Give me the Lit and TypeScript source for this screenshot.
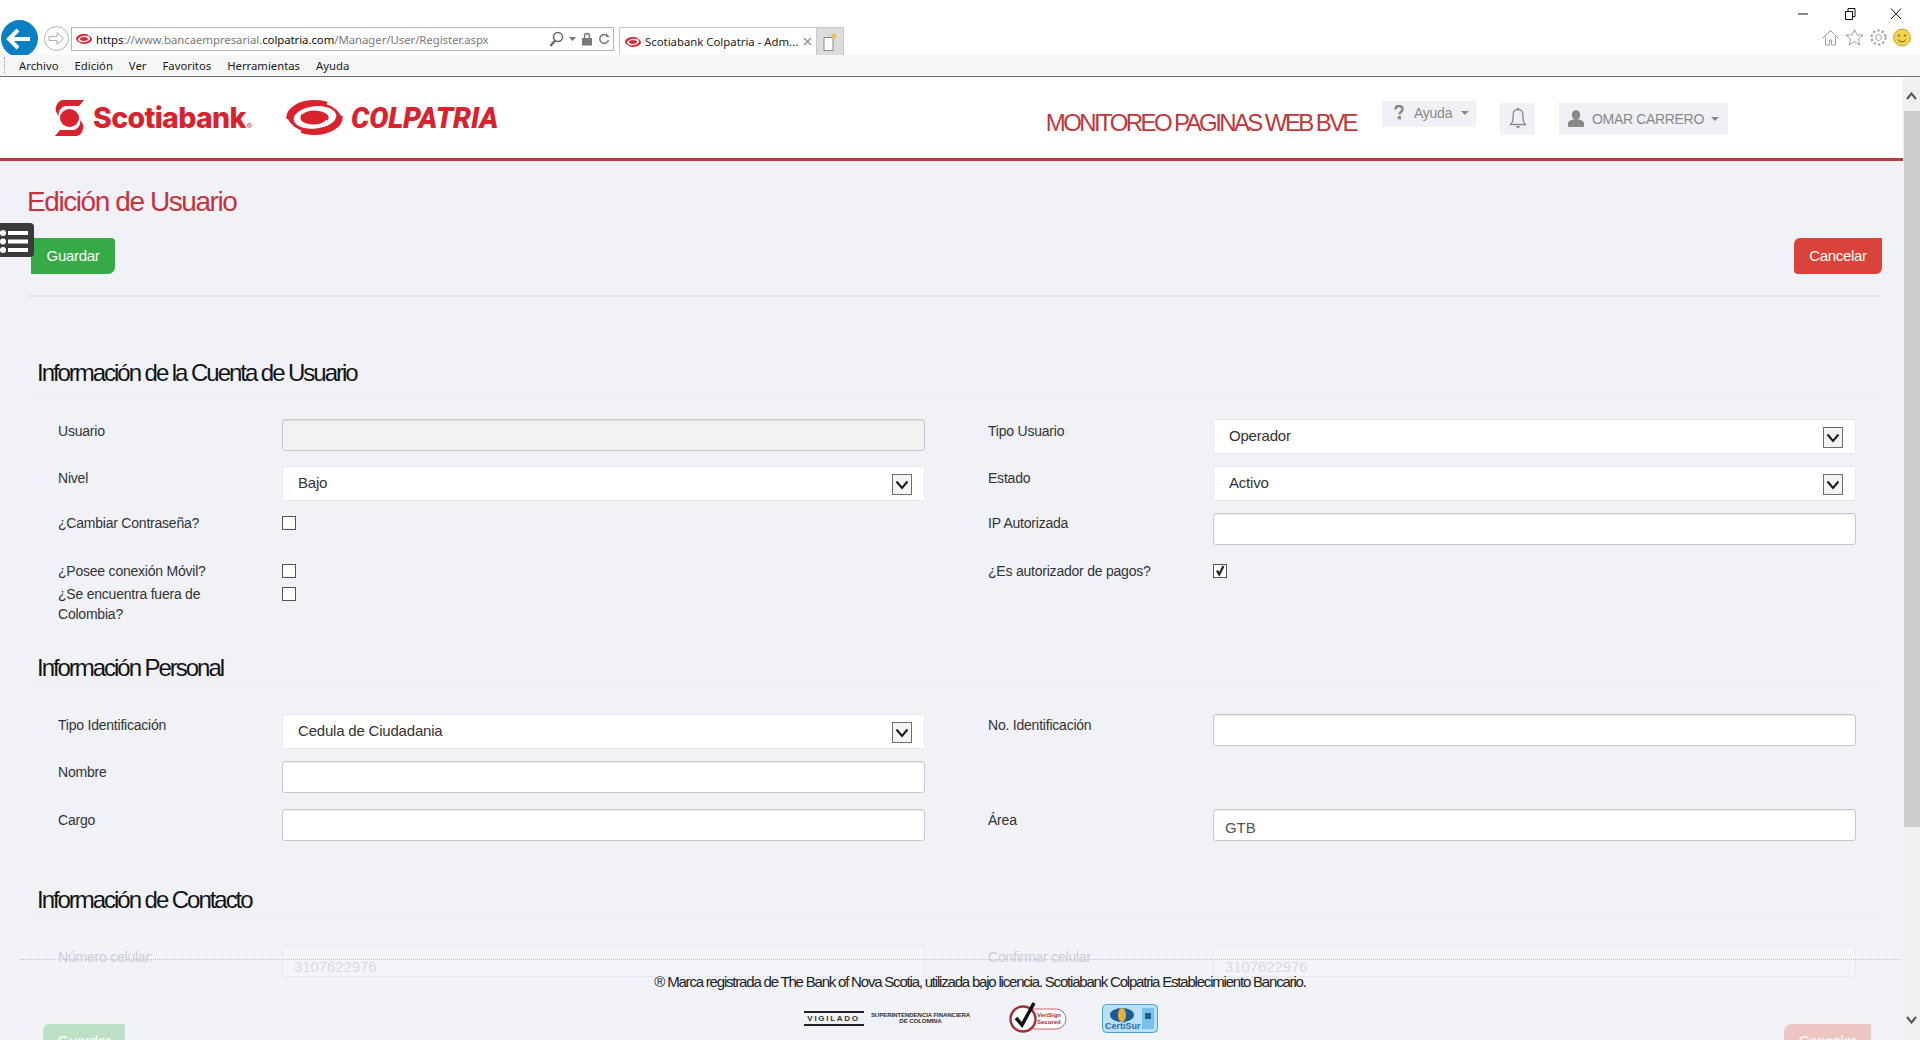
import { LitElement, html, css } from "lit";
import { customElement } from "lit/decorators.js";

const logoEye = (w: number, h: number) => html`<svg width=${w} height=${h} viewBox="0 0 58 36">
  <ellipse cx="29" cy="18" rx="29" ry="18" fill="#d8232f"/>
  <ellipse cx="29.500" cy="18" rx="22" ry="11.500" fill="#fff" transform="rotate(-6 29 18)"/>
  <ellipse cx="29" cy="18" rx="14.500" ry="8.500" fill="#d8232f"/>
  <path d="M16 14C22 8 36 8 44 15" fill="none" stroke="#fff" stroke-width="2.200"/>
  <path d="M14 22c8 6 22 6 28-1" fill="none" stroke="#fff" stroke-width="2.200"/>
  <path d="M42 3C50 6 55 10 58 16" fill="none" stroke="#fff" stroke-width="3"/>
  <path d="M0 20c3 6 8 10 15 13" fill="none" stroke="#fff" stroke-width="3"/>
</svg>`;

const chevron = html`<svg class="sel-arrow" width="20" height="21" viewBox="0 0 20 21">
  <rect x=".5" y=".5" width="19" height="20" fill="#f4f4f4" stroke="#6f6f6f"/>
  <path d="M4.500 7.500 10 14l5.500-6.500" fill="none" stroke="#1a1a1a" stroke-width="2"/>
</svg>`;

@customElement("app-root")
export class AppRoot extends LitElement {
  static styles = css`
    :host { display: block; width: 1920px; height: 1040px; overflow: hidden; position: relative; background: #fff; font-family: "Liberation Sans", Arial, sans-serif; color: #333; }
    * { box-sizing: border-box; }

    .chrome { height: 55px; background: #fff; display: flex; align-items: flex-start; position: relative; overflow: hidden; font-family: "Noto Sans", "Open Sans", sans-serif; }
    .nav { display: flex; align-items: center; margin: 20px 0 0 1px; gap: 6px; flex: none; }
    .address { flex: none; margin: 27px 0 0 2px; width: 543px; height: 24px; border: 1px solid #b5b5b5; display: flex; align-items: center; padding: 0 3px 0 4px; font-size: 11.4px; color: #7a7a7a; white-space: nowrap; }
    .address .fav { margin-right: 4px; flex: none; display: flex; }
    .address b { font-weight: 400; color: #111; }
    .address .url { flex: 1; letter-spacing: -.06px; padding-top: 1px; }
    .addr-tools { display: flex; align-items: center; gap: 5px; }
    .tab { flex: none; margin: 27px 0 0 5px; width: 198px; height: 28px; border: 1px solid #c8c8c8; border-bottom: none; background: #fff; display: flex; align-items: center; padding: 0 4px 0 5px; gap: 4px; font-size: 11.4px; color: #222; white-space: nowrap; }
    .tab span { flex: 1; letter-spacing: -.02px; }
    .newtab { flex: none; margin-top: 27px; width: 27px; height: 28px; background: #dcdcdc; border: 1px solid #c8c8c8; border-left: none; border-bottom: none; display: flex; align-items: center; justify-content: center; }
    .winbtns { position: absolute; top: 6px; right: -3px; display: flex; }
    .tools { position: absolute; top: 28px; right: 9px; display: flex; gap: 5px; align-items: center; }

    .menubar { height: 22px; background: #f6f6f6; border-bottom: 1px solid #6e6e6e; display: flex; align-items: center; gap: 16px; padding: 0 0 1px 19px; font-family: "Noto Sans", sans-serif; font-size: 11.3px; color: #1a1a1a; position: relative; }
    .grip { position: absolute; left: 4px; top: 2px; bottom: 3px; border-left: 1px dotted #999; }

    .view { display: flex; height: 963px; }
    .page { flex: 1; min-width: 0; position: relative; overflow: hidden; background: #f0f2f7; }
    .scrollbar { width: 17px; flex: none; background: #f0f0f0; display: flex; flex-direction: column; position: relative; padding-top: 34px; }
    .thumb { height: 716px; background: #cdcdcd; width: 16px; margin-left: 1px; }
    .scroll-btn { position: absolute; left: 3px; }
    .scroll-btn.up { top: 15px; }
    .scroll-btn.down { bottom: 16px; }

    header { height: 84px; background: #fff; border-bottom: 3px solid #bb3a40; display: flex; align-items: flex-start; position: relative; padding-right: 175px; }
    .scotia { display: flex; align-items: center; margin: 23px 0 0 55px; gap: 9px; flex: none; }
    .scotia-text { font-family: "Inter", sans-serif; font-weight: 800; font-size: 28.5px; color: #d8232f; letter-spacing: -.67px; line-height: 1; }
    .scotia-text sup { font-size: 8px; font-weight: 400; letter-spacing: 0; vertical-align: -1px; margin-left: 1px; }
    .colp { display: flex; align-items: center; margin: 23px 0 0 34px; gap: 8px; flex: none; }
    .colp-text { font-family: "Roboto", sans-serif; font-weight: 900; font-style: italic; font-size: 28.6px; color: #d8232f; letter-spacing: -.12px; line-height: 1; padding-top: 1px; }
    .sys { margin: 32px 0 0 auto; font-size: 24px; color: #c0373e; letter-spacing: -2.6px; line-height: 28px; white-space: nowrap; flex: none; }
    .help { margin: 24px 0 0 26px; width: 94px; height: 26px; background: #f0f1f7; flex: none; display: flex; align-items: center; padding: 0 0 2px 12px; gap: 10px; font-size: 14px; color: #888; letter-spacing: -.25px; }
    .bell { margin: 26px 0 0 24px; width: 35px; height: 32px; background: #f0f1f7; flex: none; display: flex; align-items: center; justify-content: center; }
    .user { margin: 26px 0 0 24px; width: 169px; height: 32px; background: #f0f1f7; flex: none; display: flex; align-items: center; padding-left: 9px; gap: 8px; font-size: 14px; color: #888; letter-spacing: -.33px; }
    .caret { width: 0; height: 0; border-left: 4px solid transparent; border-right: 4px solid transparent; border-top: 4px solid #888; margin-left: -1px; }

    main { padding: 0 21px 0 27px; }
    h1 { margin: 0; font-weight: 400; font-size: 28px; line-height: 34px; color: #c4343c; letter-spacing: -1.42px; padding-top: 24px; height: 77px; }
    .actions { display: flex; justify-content: space-between; padding: 0 0 22px 4px; border-bottom: 2px solid #e4e6ea; height: 59px; }
    .btn { height: 36px; display: flex; align-items: center; justify-content: center; color: #fff; font-size: 15px; letter-spacing: -.3px; padding-bottom: 2px; }
    .btn.save { width: 84px; background: #35aa47; border-radius: 0 4px 7px 0; }
    .btn.cancel { width: 88px; background: #d9433a; border-radius: 6px 0 6px 4px; }

    h2 { margin: 0; font-weight: 400; font-size: 24px; letter-spacing: -2.04px; line-height: 28px; color: #141414; padding-left: 10px; height: 34px; position: relative; }
    h2::after { content: ""; position: absolute; left: 6px; right: 0; bottom: 0; height: 1px; background: #eaecf1; }
    .sec1 { padding-top: 62px; }
    .gap-a { height: 29px; }

    .grid { display: grid; grid-template-columns: 224px 643px 63px 225px 642.5px; padding-left: 31px; margin-top: 26px; font-size: 14px; color: #333; }
    .grid label { letter-spacing: -.22px; line-height: 20px; padding-top: 2px; }
    .grid label.tight { padding-top: 0; }
    .g1 { grid-template-rows: 47px 47px 46px 23px 72px; }
    .g2 { grid-template-rows: 47px 48px 48px; margin-top: 26px; }
    .g2 label { padding-top: 1px; }
    .g3 { grid-template-rows: 48px; margin-top: 25px; }
    .spacer { grid-column: 3; }

    .input { height: 32px; border: 1px solid #c9c9c9; border-radius: 3px; background: #fff; box-shadow: inset 0 1px 1px rgba(0,0,0,.08); font-size: 15px; color: #555; padding: 8px 11px 0; line-height: 20px; letter-spacing: -.1px; }
    .input.off { background: #f2f2f2; }
    .input.cell { padding-top: 11px; color: #777; }
    .select { height: 35px; background: #fff; border: 1px solid #e9ebef; display: flex; align-items: center; justify-content: space-between; padding: 1px 12px 0 15px; font-size: 15px; color: #333; letter-spacing: -.2px; }
    .select span { margin-top: -3px; }
    .check { width: 14px; height: 14px; border: 1px solid #555; background: #fff; margin-top: 5px; display: flex; }
    .check.tight { margin-top: 3px; }
    .check svg { display: block; }

    .overlay { position: absolute; left: 0; right: 0; top: 868px; height: 95px; background: rgba(241,243,248,.8); padding-top: 28px; text-align: center; }
    .dots { position: absolute; left: 20px; right: 3px; top: 14px; border-top: 1px dotted #c4c6cb; }
    .legal { font-size: 15px; letter-spacing: -1.2px; color: #222; line-height: 18px; margin-left: 57px; }
    .seals { display: flex; align-items: center; justify-content: center; margin: 11px 0 0 0; padding-left: 58px; }
    .vig { display: flex; align-items: center; gap: 4px; }
    .vig-box { width: 60px; border-top: 2px solid #222; border-bottom: 2px solid #222; font-weight: 700; font-size: 8px; letter-spacing: 1.7px; text-align: center; color: #333; line-height: 9px; padding: 1px 0; white-space: nowrap; }
    .vig-sub { font-weight: 700; font-size: 6.2px; line-height: 6.5px; letter-spacing: -.15px; color: #333; text-align: center; width: 106px; }
    .vsign { margin-left: 34px; }
    .certi { margin-left: 34px; }
    .ghost { position: absolute; top: 947px; height: 40px; display: flex; justify-content: center; padding-top: 8px; font-size: 15px; color: #fff; letter-spacing: -.3px; }
    .ghost.g { left: 43px; width: 82px; background: #bde0c6; border-radius: 6px 0 0 0; }
    .ghost.r { left: 1784px; width: 87px; background: #eec5c5; border-radius: 8px 0 0 0; }
    .handle { position: absolute; left: 0; top: 223px; width: 34px; height: 34px; display: flex; }
  `;

  private check(on = false, tight = false) {
    return html`<div class="check ${tight ? "tight" : ""}">${on ? html`<svg width="12" height="12" viewBox="0 0 12 12"><path d="M3 5.500 5.200 9.500 9.500 1" fill="none" stroke="#222" stroke-width="2.200"/></svg>` : ""}</div>`;
  }
  private sel(t: string) { return html`<div class="select"><span>${t}</span>${chevron}</div>`; }

  render() {
    return html`
      <div class="chrome">
        <div class="nav">
          <svg width="37" height="37" viewBox="0 0 37 37"><circle cx="18.500" cy="18.500" r="18.500" fill="#0a7fc2"/><path d="M8 19h21M17 10l-9 9 9 9" fill="none" stroke="#fff" stroke-width="4"/></svg>
          <svg width="25" height="25" viewBox="0 0 25 25"><circle cx="12.500" cy="12.500" r="12" fill="#fff" stroke="#b5b5b5"/><path d="M5 10.500h8V6.500l6.500 6-6.500 6v-4H5z" fill="none" stroke="#b0b0b0"/></svg>
        </div>
        <div class="address">
          <span class="fav">${logoEye(16, 10)}</span>
          <span class="url"><b>https</b>://www.bancaempresarial.<b>colpatria.com</b>/Manager/User/Register.aspx</span>
          <span class="addr-tools">
            <svg width="15" height="16" viewBox="0 0 15 16"><circle cx="9" cy="6" r="4.500" fill="none" stroke="#666" stroke-width="1.500"/><path d="M6 9.500 1.500 15" stroke="#666" stroke-width="2.200"/></svg>
            <svg width="7" height="4" viewBox="0 0 7 4"><path d="M0 0h7L3.500 4z" fill="#777"/></svg>
            <svg width="12" height="14" viewBox="0 0 12 14"><path d="M3.500 6V4a2.500 2.500 0 0 1 5 0v2" fill="none" stroke="#777" stroke-width="1.400"/><rect x="1" y="6" width="10" height="7.500" fill="#777"/></svg>
            <svg width="12" height="14" viewBox="0 0 12 14"><path d="M9.500 4A4.400 4.400 0 1 0 10.500 8" fill="none" stroke="#777" stroke-width="1.500"/><path d="M8 1v4h3.500z" fill="#777"/></svg>
          </span>
        </div>
        <div class="tab">
          ${logoEye(16, 10)}<span>Scotiabank Colpatria - Adm...</span>
          <svg width="9" height="9" viewBox="0 0 9 9"><path d="M1 1l7 7M8 1 1 8" stroke="#999" stroke-width="1.600"/></svg>
        </div>
        <div class="newtab">
          <svg width="16" height="20" viewBox="0 0 16 20"><path d="M2 5.500h9v13H2z" fill="#fff" stroke="#888"/><path d="M12 1v6M9.500 4h5M10 2l4 4M14 2l-4 4" stroke="#f2b233" stroke-width="1"/></svg>
        </div>
        <div class="winbtns">
          <svg width="46" height="16" viewBox="0 0 46 16"><path d="M13 8h10" stroke="#111"/></svg>
          <svg width="46" height="16" viewBox="0 0 46 16"><path d="M14.500 5.500h7v8h-7zM17 5.500V2.500h7v8h-2.500" fill="none" stroke="#111"/></svg>
          <svg width="46" height="16" viewBox="0 0 46 16"><path d="M14 2.500l10 10.500M24 2.500 14 13" stroke="#111" stroke-width="1"/></svg>
        </div>
        <div class="tools">
          <svg width="19" height="19" viewBox="0 0 19 19"><path d="M2 10 9.500 2.500 17 10M4.500 8.500v8.500h4v-5h2v5h4V8.500" fill="none" stroke="#a0a0a0"/></svg>
          <svg width="19" height="19" viewBox="0 0 19 19"><path d="M9.500 1.500 12 7h6l-4.700 4 1.700 6-5.500-3.400L4 17l1.700-6L1 7h6z" fill="none" stroke="#a0a0a0"/></svg>
          <svg width="19" height="19" viewBox="0 0 19 19"><circle cx="9.500" cy="9.500" r="3" fill="none" stroke="#a0a0a0"/><circle cx="9.500" cy="9.500" r="7" fill="none" stroke="#a0a0a0" stroke-width="2" stroke-dasharray="2.500 2"/></svg>
          <svg width="18" height="19" viewBox="0 0 18 19"><circle cx="9" cy="9.500" r="8.500" fill="#f1d44c" stroke="#c9a838"/><circle cx="6" cy="7.500" r="1" fill="#7b5d18"/><circle cx="12" cy="7.500" r="1" fill="#7b5d18"/><path d="M5 11.500c2 3 6 3 8 0" fill="none" stroke="#7b5d18"/></svg>
        </div>
      </div>
      <div class="menubar">
        <div class="grip"></div>
        <span>Archivo</span><span>Edición</span><span>Ver</span><span>Favoritos</span><span>Herramientas</span><span>Ayuda</span>
      </div>
      <div class="view">
        <div class="page">
          <header>
            <div class="scotia">
              <svg width="29" height="36" viewBox="0 0 29 36">
                <path fill="#d8232f" d="M7 0h22l-5 6H10C5 8 3 12 4 16 1 13 0 10 1 7 2 3 4 1 7 0zM22 36H0l5-6h14c5-2 7-6 6-10 3 3 4 6 3 9-1 4-3 6-6 7z"/>
                <ellipse cx="14.500" cy="18" rx="9.500" ry="9" fill="#d8232f"/>
              </svg>
              <span class="scotia-text">Scotiabank<sup>®</sup></span>
            </div>
            <div class="colp">${logoEye(57, 35)}<span class="colp-text">COLPATRIA</span></div>
            <div class="sys">MONITOREO PAGINAS WEB BVE</div>
            <div class="help">
              <svg width="10" height="16" viewBox="0 0 10 16"><path d="M1.500 4.500C1.500 2 3 1 5 1s3.500 1.200 3.500 3.200c0 2.800-3 2.800-3 5.300" fill="none" stroke="#888" stroke-width="2.400"/><rect x="3.800" y="11" width="3.200" height="3.400" fill="#888"/></svg>
              <span>Ayuda</span><i class="caret"></i>
            </div>
            <div class="bell">
              <svg width="18" height="24" viewBox="0 0 18 24"><path d="M9 2.500c-3.500 0-5 2.500-5 6v4.500c0 2-1.500 3-2.500 4.500h15c-1-1.500-2.500-2.500-2.500-4.500V8.500c0-3.500-1.500-6-5-6z" fill="none" stroke="#888" stroke-width="1.300"/><path d="M7 19h4a2 2 0 0 1-4 0z" fill="#888"/><circle cx="9" cy="2" r="1.200" fill="#888"/></svg>
            </div>
            <div class="user">
              <svg width="16" height="18" viewBox="0 0 16 18"><ellipse cx="8" cy="5" rx="4.200" ry="4.800" fill="#888"/><path d="M0 17v-3.500C0 11 3 10 5 9.500h6c2 .5 5 1.500 5 4V17z" fill="#888"/></svg>
              <span>OMAR CARRERO</span><i class="caret"></i>
            </div>
          </header>
          <main>
            <h1>Edición de Usuario</h1>
            <div class="actions">
              <div class="btn save">Guardar</div>
              <div class="btn cancel">Cancelar</div>
            </div>
            <div class="sec1"><h2>Información de la Cuenta de Usuario</h2></div>
            <div class="grid g1">
              <label>Usuario</label><div class="input off"></div><div class="spacer"></div><label>Tipo Usuario</label>${this.sel("Operador")}
              <label>Nivel</label>${this.sel("Bajo")}<div class="spacer"></div><label>Estado</label>${this.sel("Activo")}
              <label class="tight">¿Cambiar Contraseña?</label>${this.check(false, true)}<div class="spacer"></div><label class="tight">IP Autorizada</label><div class="input"></div>
              <label>¿Posee conexión Móvil?</label>${this.check()}<div class="spacer"></div><label>¿Es autorizador de pagos?</label>${this.check(true)}
              <label>¿Se encuentra fuera de<br />Colombia?</label>${this.check()}
            </div>
            <h2>Información Personal</h2>
            <div class="grid g2">
              <label>Tipo Identificación</label>${this.sel("Cedula de Ciudadania")}<div class="spacer"></div><label>No. Identificación</label><div class="input"></div>
              <label>Nombre</label><div class="input"></div><div class="spacer"></div><div></div><div></div>
              <label>Cargo</label><div class="input"></div><div class="spacer"></div><label>Área</label><div class="input">GTB</div>
            </div>
            <div class="gap-a"></div>
            <h2>Información de Contacto</h2>
            <div class="grid g3">
              <label>Número celular:</label><div class="input cell">3107622976</div><div class="spacer"></div><label>Confirmar celular</label><div class="input cell">3107622976</div>
            </div>
          </main>
          <div class="overlay">
            <div class="dots"></div>
            <div class="legal">® Marca registrada de The Bank of Nova Scotia, utilizada bajo licencia. Scotiabank Colpatria Establecimiento Bancario.</div>
            <div class="seals">
              <div class="vig"><div class="vig-box">VIGILADO</div><div class="vig-sub">SUPERINTENDENCIA FINANCIERA<br />DE COLOMBIA</div></div>
              <svg class="vsign" width="60" height="32" viewBox="0 0 60 32"><rect x="16" y="7" width="42" height="20" rx="10" fill="#fff" stroke="#c9626b"/><circle cx="15" cy="17" r="12.500" fill="#fff" stroke="#a3303c" stroke-width="2.400"/><path d="M8 16l6 7L26 1" fill="none" stroke="#111" stroke-width="3.500"/><text x="29" y="15" font-size="6" font-weight="700" fill="#a3303c" font-family="Liberation Sans">VeriSign</text><text x="29" y="22" font-size="6" font-weight="700" fill="#a3303c" font-family="Liberation Sans">Secured</text></svg>
              <svg class="certi" width="56" height="29" viewBox="0 0 56 29"><rect x=".5" y=".5" width="55" height="28" rx="4" fill="#b9e0f5" stroke="#4aa3d8"/><ellipse cx="20" cy="11" rx="12" ry="7" fill="#1d5a99"/><ellipse cx="20" cy="11" rx="4" ry="7" fill="#e2b13a"/><text x="3" y="25" font-size="9" font-weight="700" fill="#2a6ca8" font-family="Liberation Sans">CertiSur</text><rect x="40" y="4" width="12" height="21" fill="#7ac0ea"/><rect x="43" y="9" width="6" height="6" fill="#1d5a99"/></svg>
            </div>
          </div>
          <div class="ghost g">Guardar</div>
          <div class="ghost r">Cancelar</div>
        </div>
        <div class="scrollbar">
          <svg class="scroll-btn up" width="11" height="8" viewBox="0 0 11 8"><path d="M1 7l4.500-5.500L10 7" fill="none" stroke="#555" stroke-width="2"/></svg>
          <div class="thumb"></div>
          <svg class="scroll-btn down" width="11" height="8" viewBox="0 0 11 8"><path d="M1 1l4.500 5.500L10 1" fill="none" stroke="#555" stroke-width="2"/></svg>
        </div>
      </div>
      <div class="handle">
        <svg width="34" height="34" viewBox="0 0 34 34"><path d="M0 0h30a4 4 0 0 1 4 4v26a4 4 0 0 1-4 4H0z" fill="#3a3a3c"/><g fill="#fff"><circle cx="3" cy="10" r="3"/><circle cx="3" cy="18.500" r="3"/><circle cx="3" cy="27" r="3"/><rect x="8" y="8" width="20" height="4"/><rect x="8" y="16.500" width="20" height="4"/><rect x="8" y="25" width="20" height="4"/></g></svg>
      </div>
    `;
  }
}
